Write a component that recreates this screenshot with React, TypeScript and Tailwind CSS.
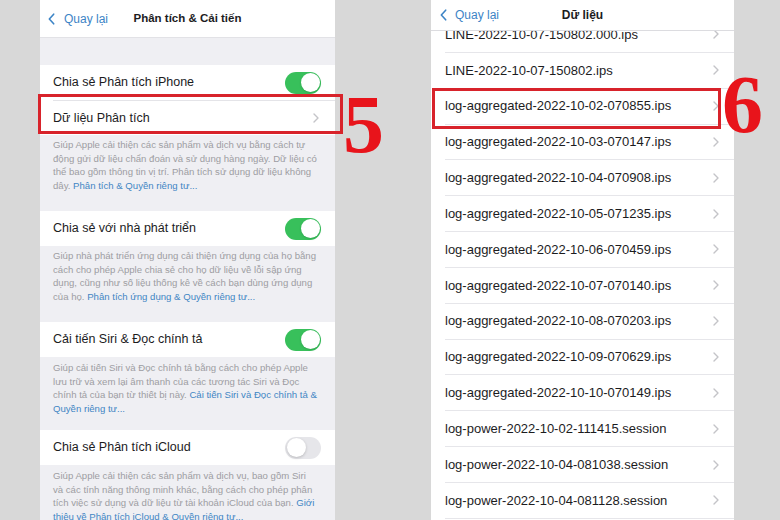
import React from 'react';

const BackChevron: React.FC<{ className?: string }> = ({ className }) => (
  <svg className={className} viewBox="0 0 8 13" fill="none" stroke="currentColor" strokeWidth={1.8} strokeLinecap="round" strokeLinejoin="round">
    <path d="M6.5 1L1.5 6.5l5 5.5" />
  </svg>
);

const RowChevron: React.FC = () => (
  <svg className="w-[6px] h-[10px] text-[#c4c4c8]" viewBox="0 0 6 10" fill="none" stroke="currentColor" strokeWidth={1.4} strokeLinecap="round" strokeLinejoin="round">
    <path d="M1 1l4 4-4 4" />
  </svg>
);

const Toggle: React.FC<{ on: boolean }> = ({ on }) =>
  on ? (
    <div className="w-[36px] h-[22px] rounded-full bg-[#38c05b] flex items-center justify-end p-[1.5px]">
      <div className="w-[19px] h-[19px] rounded-full bg-white shadow-sm" />
    </div>
  ) : (
    <div className="w-[36px] h-[22px] rounded-full bg-[#e6e6ea] flex items-center justify-start p-[1.5px]">
      <div className="w-[19px] h-[19px] rounded-full bg-white shadow-[0_1px_3px_rgba(0,0,0,0.2)]" />
    </div>
  );

type Line = { text: string; link?: string };

const Footnote: React.FC<{ lines: Line[]; pad: string }> = ({ lines, pad }) => (
  <div className={`px-[13px] text-[9.6px] leading-[13.5px] text-[#9d9da2] ${pad}`}>
    {lines.map((l, i) => (
      <div key={i} className="whitespace-nowrap">
        {l.text}
        {l.link && <span className="text-[#3f86c4]">{l.link}</span>}
      </div>
    ))}
  </div>
);

const SwitchRow: React.FC<{ label: string; on: boolean }> = ({ label, on }) => (
  <div className="h-[35px] bg-white flex items-center justify-between pl-[13px] pr-[14px]">
    <span className="text-[12.5px] text-[#1c1c1e]">{label}</span>
    <Toggle on={on} />
  </div>
);

const files = [
  'LINE-2022-10-07-150802.000.ips',
  'LINE-2022-10-07-150802.ips',
  'log-aggregated-2022-10-02-070855.ips',
  'log-aggregated-2022-10-03-070147.ips',
  'log-aggregated-2022-10-04-070908.ips',
  'log-aggregated-2022-10-05-071235.ips',
  'log-aggregated-2022-10-06-070459.ips',
  'log-aggregated-2022-10-07-070140.ips',
  'log-aggregated-2022-10-08-070203.ips',
  'log-aggregated-2022-10-09-070629.ips',
  'log-aggregated-2022-10-10-070149.ips',
  'log-power-2022-10-02-111415.session',
  'log-power-2022-10-04-081038.session',
  'log-power-2022-10-04-081128.session',
];

export default function App() {
  return (
    <div
      className="relative w-[780px] h-[520px] overflow-hidden bg-[#d8d8d8] flex"
      style={{ fontFamily: '"Liberation Sans", Arial, sans-serif' }}
    >
      {/* left phone */}
      <div className="ml-[40px] w-[295px] h-full shrink-0 bg-[#efeff3] overflow-hidden">
        <div className="h-[38px] bg-white border-b border-[#e2e2e6] grid grid-cols-[1fr_auto_1fr] items-center">
          <div className="flex items-center gap-[9px] pl-[8px] text-[#3c84c6]">
            <BackChevron className="w-[7px] h-[12px]" />
            <span className="text-[12px]">Quay lại</span>
          </div>
          <span className="text-[11.5px] font-bold text-[#1c1c1e]">Phân tích &amp; Cải tiến</span>
          <div />
        </div>
        <div className="h-[27px]" />
        <SwitchRow label="Chia sẻ Phân tích iPhone" on />
        <div className="h-[35px] bg-white pl-[13px]">
          <div className="h-full flex items-center justify-between pr-[16px] border-t border-[#e4e4e8]">
            <span className="text-[12.5px] text-[#1c1c1e]">Dữ liệu Phân tích</span>
            <RowChevron />
          </div>
        </div>
        <Footnote
          pad="pt-[3px] pb-[19px]"
          lines={[
            { text: 'Giúp Apple cải thiện các sản phẩm và dịch vụ bằng cách tự' },
            { text: 'động gửi dữ liệu chẩn đoán và sử dụng hàng ngày. Dữ liệu có' },
            { text: 'thể bao gồm thông tin vị trí. Phân tích sử dụng dữ liệu không' },
            { text: 'dây. ', link: 'Phân tích & Quyền riêng tư...' },
          ]}
        />
        <SwitchRow label="Chia sẻ với nhà phát triển" on />
        <Footnote
          pad="pt-[3px] pb-[19px]"
          lines={[
            { text: 'Giúp nhà phát triển ứng dụng cải thiện ứng dụng của họ bằng' },
            { text: 'cách cho phép Apple chia sẻ cho họ dữ liệu về lỗi sập ứng' },
            { text: 'dụng, cũng như số liệu thống kê về cách bạn dùng ứng dụng' },
            { text: 'của họ. ', link: 'Phân tích ứng dụng & Quyền riêng tư...' },
          ]}
        />
        <SwitchRow label="Cải tiến Siri & Đọc chính tả" on />
        <Footnote
          pad="pt-[4px] pb-[15px]"
          lines={[
            { text: 'Giúp cải tiến Siri và Đọc chính tả bằng cách cho phép Apple' },
            { text: 'lưu trữ và xem lại âm thanh của các tương tác Siri và Đọc' },
            { text: 'chính tả của bạn từ thiết bị này. ', link: 'Cải tiến Siri và Đọc chính tả &' },
            { text: '', link: 'Quyền riêng tư...' },
          ]}
        />
        <SwitchRow label="Chia sẻ Phân tích iCloud" on={false} />
        <Footnote
          pad="pt-[4px] pb-[15px]"
          lines={[
            { text: 'Giúp Apple cải thiện các sản phẩm và dịch vụ, bao gồm Siri' },
            { text: 'và các tính năng thông minh khác, bằng cách cho phép phân' },
            { text: 'tích việc sử dụng và dữ liệu từ tài khoản iCloud của bạn. ', link: 'Giới' },
            { text: '', link: 'thiệu về Phân tích iCloud & Quyền riêng tư...' },
          ]}
        />
      </div>

      {/* right phone */}
      <div className="ml-[96px] w-[303px] h-full shrink-0 bg-white flex flex-col">
        <div className="h-[31px] shrink-0 bg-white border-b border-[#dcdce0] grid grid-cols-[1fr_auto_1fr] items-center">
          <div className="flex items-center gap-[8px] pl-[9px] text-[#3c84c6]">
            <BackChevron className="w-[7px] h-[12px]" />
            <span className="text-[12px]">Quay lại</span>
          </div>
          <span className="text-[12px] font-bold text-[#1c1c1e]">Dữ liệu</span>
          <div />
        </div>
        <div className="flex-1 overflow-hidden">
          <div className="-mt-[14px]">
            {files.map((f) => (
              <div key={f} className="h-[35.85px] pl-[14px]">
                <div className="h-full flex items-center justify-between pr-[15px] border-b border-[#e6e6ea]">
                  <span className="text-[13px] text-[#1c1c1e]">{f}</span>
                  <RowChevron />
                </div>
              </div>
            ))}
          </div>
        </div>
      </div>

      {/* annotations */}
      <div className="absolute left-[38px] top-[94px] w-[305px] h-[40px] border-[3px] border-[#d8232b]" />
      <div
        className="absolute left-[343px] top-[84px] text-[82px] leading-[82px] font-bold text-[#e8141b]"
        style={{ fontFamily: '"Liberation Serif", "Times New Roman", serif' }}
      >
        5
      </div>
      <div className="absolute left-[432px] top-[88px] w-[289px] h-[41px] border-[3px] border-[#d8232b]" />
      <div
        className="absolute left-[722px] top-[64px] text-[82px] leading-[82px] font-bold text-[#e8141b]"
        style={{ fontFamily: '"Liberation Serif", "Times New Roman", serif' }}
      >
        6
      </div>
    </div>
  );
}
